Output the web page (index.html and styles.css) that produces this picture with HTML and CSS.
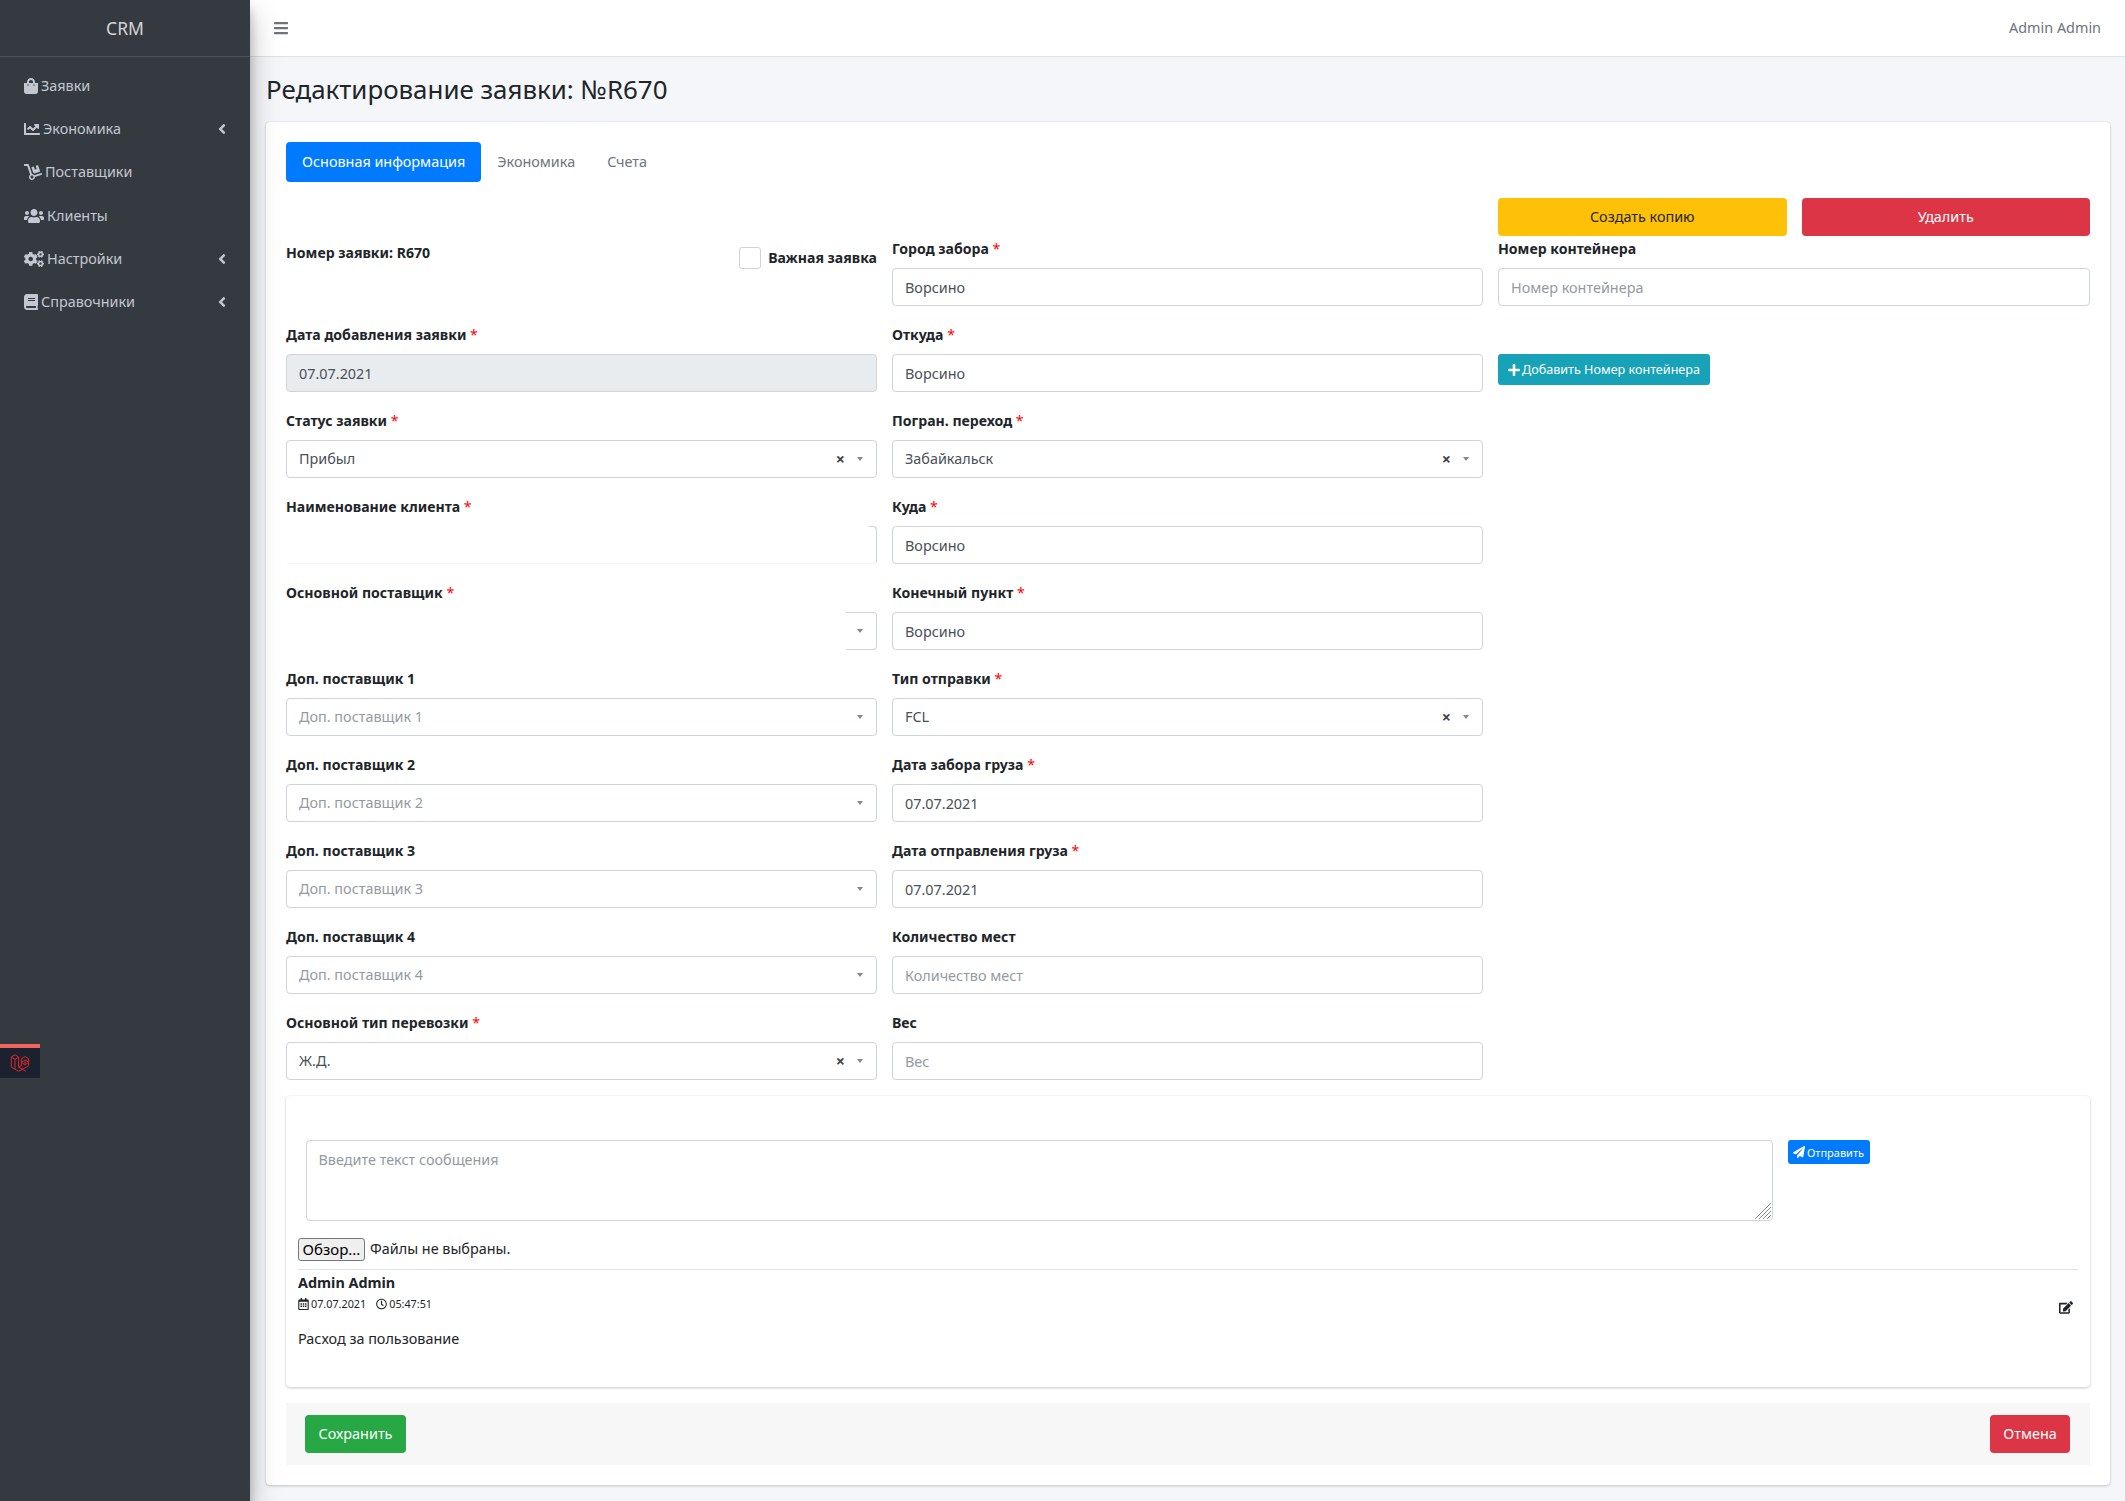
FILE: index.html
```html
<!DOCTYPE html>
<html lang="ru">
<head>
<meta charset="utf-8">
<title>CRM</title>
<link rel="stylesheet" href="styles.css">
</head>
<body>
<svg class="defs" aria-hidden="true">
  <symbol id="i-angle" viewBox="0 0 256 512"><path d="M31.7 239l136-136c9.4-9.4 24.6-9.4 33.9 0l22.6 22.6c9.4 9.4 9.4 24.6 0 33.9L127.9 256l96.4 96.4c9.4 9.4 9.4 24.6 0 33.9L201.7 409c-9.4 9.4-24.6 9.4-33.9 0l-136-136c-9.5-9.4-9.5-24.6-.1-34z"/></symbol>
</svg>
<div class="app">
  <aside class="sidebar">
    <div class="brand">CRM</div>
    <nav class="nav">
      <a class="nav-link"><svg class="ico w14" viewBox="0 0 448 512"><path d="M352 160v-32C352 57.42 294.579 0 224 0 153.42 0 96 57.42 96 128v32H0v272c0 44.183 35.817 80 80 80h288c44.183 0 80-35.817 80-80V160h-96zm-192-32c0-35.29 28.71-64 64-64s64 28.71 64 64v32H160v-32zm160 120c-13.255 0-24-10.745-24-24s10.745-24 24-24 24 10.745 24 24-10.745 24-24 24zm-192 0c-13.255 0-24-10.745-24-24s10.745-24 24-24 24 10.745 24 24-10.745 24-24 24z"/></svg><span>Заявки</span></a>
      <a class="nav-link"><svg class="ico w16" viewBox="0 0 512 512"><path d="M496 384H64V80c0-8.84-7.16-16-16-16H16C7.16 64 0 71.16 0 80v336c0 17.67 14.33 32 32 32h464c8.84 0 16-7.16 16-16v-32c0-8.84-7.16-16-16-16zM464 96H345.94c-21.38 0-32.09 25.85-16.97 40.97l32.4 32.4L288 242.75l-73.37-73.37c-12.5-12.5-32.76-12.5-45.25 0l-68.69 68.69c-6.25 6.25-6.25 16.38 0 22.63l22.62 22.62c6.25 6.25 16.38 6.25 22.63 0L192 237.25l73.37 73.37c12.5 12.5 32.76 12.5 45.25 0l96-96 32.4 32.4c15.12 15.12 40.97 4.41 40.97-16.97V112c.01-8.84-7.15-16-15.99-16z"/></svg><span>Экономика</span><svg class="chev"><use href="#i-angle"/></svg></a>
      <a class="nav-link"><svg class="ico w18" viewBox="0 0 576 512"><path d="M294.2 277.7c18 5 34.7 13.4 49.5 24.7l161.5-53.8c8.4-2.8 12.9-11.9 10.1-20.2L454.9 47.2c-2.8-8.4-11.9-12.9-20.2-10.1l-61.1 20.4 33.1 99.4L346 177l-33.1-99.4-61.6 20.5c-8.4 2.8-12.9 11.9-10.1 20.2l53 159.4zm281 48.7L565 296c-2.8-8.4-11.9-12.9-20.2-10.1l-213.5 71.2c-17.2-22-43.6-36.4-73.5-37L158.4 21.9C154 8.8 141.8 0 128 0H16C7.2 0 0 7.2 0 16v32c0 8.8 7.2 16 16 16h88.9l92.2 276.7c-26.1 20.4-41.7 53.6-36 90.5 6.1 39.4 37.9 72.3 77.3 79.2 60.2 10.7 112.3-34.8 113.4-92.6l213.3-71.2c8.3-2.8 12.9-11.8 10.1-20.2zM256 464c-26.5 0-48-21.5-48-48s21.5-48 48-48 48 21.5 48 48-21.5 48-48 48z"/></svg><span>Поставщики</span></a>
      <a class="nav-link"><svg class="ico w20" viewBox="0 0 640 512"><path d="M96 224c35.3 0 64-28.7 64-64s-28.7-64-64-64-64 28.7-64 64 28.7 64 64 64zm448 0c35.3 0 64-28.7 64-64s-28.7-64-64-64-64 28.7-64 64 28.7 64 64 64zm32 32h-64c-17.6 0-33.5 7.1-45.1 18.6 40.3 22.1 68.9 62 75.1 109.4h66c17.7 0 32-14.3 32-32v-32c0-35.3-28.7-64-64-64zm-256 0c61.9 0 112-50.1 112-112S381.9 32 320 32 208 82.1 208 144s50.1 112 112 112zm76.8 32h-8.3c-20.8 10-43.9 16-68.5 16s-47.6-6-68.5-16h-8.3C179.6 288 128 339.6 128 403.2V432c0 26.5 21.5 48 48 48h288c26.5 0 48-21.5 48-48v-28.8c0-63.6-51.6-115.2-115.2-115.2zm-223.7-13.4C161.5 263.1 145.6 256 128 256H64c-35.3 0-64 28.7-64 64v32c0 17.7 14.3 32 32 32h65.9c6.3-47.4 34.9-87.3 75.2-109.4z"/></svg><span>Клиенты</span></a>
      <a class="nav-link"><svg class="ico w20" viewBox="0 0 640 512"><path d="M512.1 191l-8.2 14.3c-3 5.3-9.4 7.5-15.1 5.4-11.8-4.4-22.6-10.7-32.1-18.6-4.6-3.8-5.8-10.5-2.8-15.7l8.2-14.3c-6.9-8-12.3-17.3-15.9-27.4h-16.5c-6 0-11.2-4.3-12.2-10.3-2-12-2.1-24.6 0-37.1 1-6 6.2-10.4 12.2-10.4h16.5c3.6-10.1 9-19.4 15.9-27.4l-8.2-14.3c-3-5.2-1.9-11.9 2.8-15.7 9.5-7.9 20.4-14.2 32.1-18.6 5.7-2.1 12.1.1 15.1 5.4l8.2 14.3c10.5-1.9 21.2-1.9 31.7 0L552 6.3c3-5.3 9.4-7.5 15.1-5.4 11.8 4.4 22.6 10.7 32.1 18.6 4.6 3.8 5.8 10.5 2.8 15.7l-8.2 14.3c6.9 8 12.3 17.3 15.9 27.4h16.5c6 0 11.2 4.3 12.2 10.3 2 12 2.1 24.6 0 37.1-1 6-6.2 10.4-12.2 10.4h-16.5c-3.6 10.1-9 19.4-15.9 27.4l8.2 14.3c3 5.2 1.9 11.9-2.8 15.7-9.5 7.9-20.4 14.2-32.1 18.6-5.7 2.1-12.1-.1-15.1-5.4l-8.2-14.3c-10.4 1.9-21.2 1.9-31.7 0zm-10.5-58.8c38.5 29.6 82.4-14.3 52.8-52.8-38.5-29.7-82.4 14.3-52.8 52.8zM386.3 286.1l33.7 16.8c10.1 5.8 14.5 18.1 10.5 29.1-8.9 24.2-26.4 46.4-42.6 65.8-7.4 8.9-20.2 11.1-30.3 5.3l-29.1-16.8c-16 13.7-34.6 24.6-54.9 31.7v33.6c0 11.6-8.3 21.6-19.7 23.6-24.6 4.2-50.4 4.4-75.9 0-11.5-2-20-11.9-20-23.6V418c-20.3-7.2-38.9-18-54.9-31.7L74 403c-10 5.8-22.9 3.6-30.3-5.3-16.2-19.4-33.3-41.6-42.2-65.7-4-10.9.4-23.2 10.5-29.1l33.3-16.8c-3.9-20.9-3.9-42.4 0-63.4L12 205.8c-10.1-5.8-14.6-18.1-10.5-29 8.9-24.2 26-46.4 42.2-65.8 7.4-8.9 20.2-11.1 30.3-5.3l29.1 16.8c16-13.7 34.6-24.6 54.9-31.7V57.1c0-11.5 8.2-21.5 19.6-23.5 24.6-4.2 50.5-4.4 76-.1 11.5 2 20 11.9 20 23.6v33.6c20.3 7.2 38.9 18 54.9 31.7l29.1-16.8c10-5.8 22.9-3.6 30.3 5.3 16.2 19.4 33.2 41.6 42.1 65.8 4 10.9.1 23.2-10 29.1l-33.7 16.8c3.9 21 3.9 42.5 0 63.5zm-117.6 21.1c59.2-77-28.7-164.9-105.7-105.7-59.2 77 28.7 164.9 105.7 105.7zm243.4 182.7l-8.2 14.3c-3 5.3-9.4 7.5-15.1 5.4-11.8-4.4-22.6-10.7-32.1-18.6-4.6-3.8-5.8-10.5-2.8-15.7l8.2-14.3c-6.9-8-12.3-17.3-15.9-27.4h-16.5c-6 0-11.2-4.3-12.2-10.3-2-12-2.1-24.6 0-37.1 1-6 6.2-10.4 12.2-10.4h16.5c3.6-10.1 9-19.4 15.9-27.4l-8.2-14.3c-3-5.2-1.9-11.9 2.8-15.7 9.5-7.9 20.4-14.2 32.1-18.6 5.7-2.1 12.1.1 15.1 5.4l8.2 14.3c10.5-1.9 21.2-1.9 31.7 0l8.2-14.3c3-5.3 9.4-7.5 15.1-5.4 11.8 4.4 22.6 10.7 32.1 18.6 4.6 3.8 5.8 10.5 2.8 15.7l-8.2 14.3c6.9 8 12.3 17.3 15.9 27.4h16.5c6 0 11.2 4.3 12.2 10.3 2 12 2.1 24.6 0 37.1-1 6-6.2 10.4-12.2 10.4h-16.5c-3.6 10.1-9 19.4-15.9 27.4l8.2 14.3c3 5.2 1.9 11.9-2.8 15.7-9.5 7.9-20.4 14.2-32.1 18.6-5.7 2.1-12.1-.1-15.1-5.4l-8.2-14.3c-10.4 1.9-21.2 1.9-31.7 0zM501.6 431c38.5 29.6 82.4-14.3 52.8-52.8-38.5-29.6-82.4 14.3-52.8 52.8z"/></svg><span>Настройки</span><svg class="chev"><use href="#i-angle"/></svg></a>
      <a class="nav-link"><svg class="ico w14" viewBox="0 0 448 512"><path d="M448 360V24c0-13.3-10.7-24-24-24H96C43 0 0 43 0 96v320c0 53 43 96 96 96h328c13.3 0 24-10.7 24-24v-16c0-7.5-3.5-14.3-8.9-18.7-4.2-15.4-4.2-59.3 0-74.7 5.4-4.3 8.9-11.1 8.9-18.6zM128 134c0-3.3 2.7-6 6-6h212c3.3 0 6 2.7 6 6v20c0 3.3-2.7 6-6 6H134c-3.3 0-6-2.7-6-6v-20zm0 64c0-3.3 2.7-6 6-6h212c3.3 0 6 2.7 6 6v20c0 3.3-2.7 6-6 6H134c-3.3 0-6-2.7-6-6v-20zm253.4 250H96c-17.7 0-32-14.3-32-32 0-17.6 14.4-32 32-32h285.4c-1.9 17.1-1.9 46.9 0 64z"/></svg><span>Справочники</span><svg class="chev"><use href="#i-angle"/></svg></a>
    </nav>
  </aside>
  <div class="main">
    <header class="topbar">
      <svg class="burger" viewBox="0 0 448 512"><path d="M16 132h416c8.837 0 16-7.163 16-16V76c0-8.837-7.163-16-16-16H16C7.163 60 0 67.163 0 76v40c0 8.837 7.163 16 16 16zm0 160h416c8.837 0 16-7.163 16-16v-40c0-8.837-7.163-16-16-16H16c-8.837 0-16 7.163-16 16v40c0 8.837 7.163 16 16 16zm0 160h416c8.837 0 16-7.163 16-16v-40c0-8.837-7.163-16-16-16H16c-8.837 0-16 7.163-16 16v40c0 8.837 7.163 16 16 16z"/></svg>
      <span class="user">Admin Admin</span>
    </header>
    <h1 class="page-title">Редактирование заявки: №R670</h1>
    <section class="card">
      <div class="tabs">
        <a class="tab active">Основная информация</a>
        <a class="tab">Экономика</a>
        <a class="tab">Счета</a>
      </div>
      <form class="form-grid">
        <div class="actions">
          <button type="button" class="btn btn-warning">Создать копию</button>
          <button type="button" class="btn btn-danger">Удалить</button>
        </div>
        <div class="col col-1">
          <div class="field order-head">
            <b class="order-no">Номер заявки: R670</b>
            <label class="important"><span class="check"></span><b>Важная заявка</b></label>
          </div>
          <div class="field"><div class="lbl">Дата добавления заявки <i>*</i></div><input class="control disabled" value="07.07.2021" disabled></div>
          <div class="field"><div class="lbl">Статус заявки <i>*</i></div><div class="select control"><span class="val">Прибыл</span><span class="clear">×</span><span class="arrow"></span></div></div>
          <div class="field"><div class="lbl">Наименование клиента <i>*</i></div><div class="masked-client"></div></div>
          <div class="field"><div class="lbl">Основной поставщик <i>*</i></div><div class="masked-select"><div class="mask-tail"><span class="arrow"></span></div></div></div>
          <div class="field"><div class="lbl">Доп. поставщик 1</div><div class="select control"><span class="val ph">Доп. поставщик 1</span><span class="arrow"></span></div></div>
          <div class="field"><div class="lbl">Доп. поставщик 2</div><div class="select control"><span class="val ph">Доп. поставщик 2</span><span class="arrow"></span></div></div>
          <div class="field"><div class="lbl">Доп. поставщик 3</div><div class="select control"><span class="val ph">Доп. поставщик 3</span><span class="arrow"></span></div></div>
          <div class="field"><div class="lbl">Доп. поставщик 4</div><div class="select control"><span class="val ph">Доп. поставщик 4</span><span class="arrow"></span></div></div>
          <div class="field"><div class="lbl">Основной тип перевозки <i>*</i></div><div class="select control"><span class="val">Ж.Д.</span><span class="clear">×</span><span class="arrow"></span></div></div>
        </div>
        <div class="col col-2">
          <div class="field"><div class="lbl">Город забора <i>*</i></div><input class="control" value="Ворсино"></div>
          <div class="field"><div class="lbl">Откуда <i>*</i></div><input class="control" value="Ворсино"></div>
          <div class="field"><div class="lbl">Погран. переход <i>*</i></div><div class="select control"><span class="val">Забайкальск</span><span class="clear">×</span><span class="arrow"></span></div></div>
          <div class="field"><div class="lbl">Куда <i>*</i></div><input class="control" value="Ворсино"></div>
          <div class="field"><div class="lbl">Конечный пункт <i>*</i></div><input class="control" value="Ворсино"></div>
          <div class="field"><div class="lbl">Тип отправки <i>*</i></div><div class="select control"><span class="val">FCL</span><span class="clear">×</span><span class="arrow"></span></div></div>
          <div class="field"><div class="lbl">Дата забора груза <i>*</i></div><input class="control" value="07.07.2021"></div>
          <div class="field"><div class="lbl">Дата отправления груза <i>*</i></div><input class="control" value="07.07.2021"></div>
          <div class="field"><div class="lbl">Количество мест</div><input class="control" placeholder="Количество мест"></div>
          <div class="field"><div class="lbl">Вес</div><input class="control" placeholder="Вес"></div>
        </div>
        <div class="col col-3">
          <div class="field"><div class="lbl">Номер контейнера</div><input class="control" placeholder="Номер контейнера"></div>
          <button type="button" class="btn-add"><svg class="plus" viewBox="0 0 448 512"><path d="M416 208H272V64c0-17.67-14.33-32-32-32h-32c-17.67 0-32 14.33-32 32v144H32c-17.67 0-32 14.33-32 32v32c0 17.67 14.33 32 32 32h144v144c0 17.67 14.33 32 32 32h32c17.67 0 32-14.33 32-32V304h144c17.67 0 32-14.33 32-32v-32c0-17.67-14.33-32-32-32z"/></svg>Добавить Номер контейнера</button>
        </div>
      </form>
      <div class="chat">
        <div class="composer">
          <div class="message-wrap">
            <textarea class="message" placeholder="Введите текст сообщения"></textarea>
            <svg class="grip" viewBox="0 0 16 16"><path d="M0 16 16 0M4 16 16 4M8 16 16 8M12 16 16 12"/></svg>
          </div>
          <button type="button" class="btn-send"><svg class="plane" viewBox="0 0 512 512"><path d="M476 3.2L12.5 270.6c-18.1 10.4-15.8 35.6 2.2 43.2L121 358.4l287.3-253.2c5.5-4.9 13.3 2.6 8.6 8.3L176 407v80.5c0 23.6 28.5 32.9 42.5 15.8L282 426l124.6 52.2c14.2 6 30.4-2.9 33-18.2l72-432C515 7.8 493.3-6.8 476 3.2z"/></svg>Отправить</button>
        </div>
        <div class="file-row"><span class="file-btn">Обзор...</span><span class="file-text">Файлы не выбраны.</span></div>
        <div class="msg">
          <div class="msg-author">Admin Admin</div>
          <div class="msg-meta">
            <svg class="mini" viewBox="0 0 448 512"><path d="M148 288h-40c-6.6 0-12-5.4-12-12v-40c0-6.6 5.4-12 12-12h40c6.6 0 12 5.4 12 12v40c0 6.6-5.4 12-12 12zm108-12v-40c0-6.6-5.4-12-12-12h-40c-6.6 0-12 5.4-12 12v40c0 6.6 5.4 12 12 12h40c6.6 0 12-5.4 12-12zm96 0v-40c0-6.6-5.4-12-12-12h-40c-6.6 0-12 5.4-12 12v40c0 6.6 5.4 12 12 12h40c6.6 0 12-5.4 12-12zm-96 96v-40c0-6.6-5.4-12-12-12h-40c-6.6 0-12 5.4-12 12v40c0 6.6 5.4 12 12 12h40c6.6 0 12-5.4 12-12zm-96 0v-40c0-6.6-5.4-12-12-12h-40c-6.6 0-12 5.4-12 12v40c0 6.6 5.4 12 12 12h40c6.6 0 12-5.4 12-12zm192 0v-40c0-6.6-5.4-12-12-12h-40c-6.6 0-12 5.4-12 12v40c0 6.6 5.4 12 12 12h40c6.6 0 12-5.4 12-12zm96-260v352c0 26.5-21.5 48-48 48H48c-26.5 0-48-21.5-48-48V112c0-26.5 21.5-48 48-48h48V12c0-6.6 5.4-12 12-12h40c6.6 0 12 5.4 12 12v52h128V12c0-6.6 5.4-12 12-12h40c6.6 0 12 5.4 12 12v52h48c26.5 0 48 21.5 48 48zm-48 346V160H48v298c0 3.3 2.7 6 6 6h340c3.3 0 6-2.7 6-6z"/></svg>
            <span class="meta-date">07.07.2021</span>
            <svg class="mini" viewBox="0 0 512 512"><path d="M256 8C119 8 8 119 8 256s111 248 248 248 248-111 248-248S393 8 256 8zm0 448c-110.5 0-200-89.5-200-200S145.5 56 256 56s200 89.5 200 200-89.5 200-200 200zm61.8-104.4l-84.9-61.7c-3.1-2.3-4.9-5.9-4.9-9.7V116c0-6.6 5.4-12 12-12h32c6.6 0 12 5.4 12 12v141.7l66.8 48.6c5.4 3.9 6.5 11.4 2.6 16.8L334.6 349c-3.9 5.3-11.4 6.5-16.8 2.6z"/></svg>
            <span>05:47:51</span>
            <svg class="edit" viewBox="0 0 576 512"><path d="M402.6 83.2l90.2 90.2c3.8 3.8 3.8 10 0 13.8L274.4 405.6l-92.8 10.3c-12.4 1.4-22.9-9.1-21.5-21.5l10.3-92.8L388.8 83.2c3.8-3.8 10-3.8 13.8 0zm162-22.9l-48.8-48.8c-15.2-15.2-39.9-15.2-55.2 0l-35.4 35.4c-3.8 3.8-3.8 10 0 13.8l90.2 90.2c3.8 3.8 10 3.8 13.8 0l35.4-35.4c15.2-15.3 15.2-40 0-55.2zM384 346.2V448H64V128h229.8c3.2 0 6.2-1.3 8.5-3.5l40-40c7.6-7.6 2.2-20.5-8.5-20.5H48C21.5 64 0 85.5 0 112v352c0 26.5 21.5 48 48 48h352c26.5 0 48-21.5 48-48V306.2c0-10.7-12.9-16-20.5-8.5l-40 40c-2.2 2.3-3.5 5.3-3.5 8.5z"/></svg>
          </div>
          <div class="msg-text">Расход за пользование</div>
        </div>
      </div>
      <div class="card-footer">
        <button type="button" class="btn btn-success">Сохранить</button>
        <button type="button" class="btn btn-danger">Отмена</button>
      </div>
    </section>
  </div>
</div>
<div class="debugbar">
  <svg class="lara" viewBox="0 0 24 24"><path d="M2.5 5.500 6.500 3l4 2.500v11l8 4.500M2.500 5.500v11l8 4.500 11-6v-4l-4-2.200-4 2.200v4M6.500 8 2.500 5.500M6.500 8l4-2.500M6.500 8v11M10.500 16.500l3-1.700M17.500 9.300v4.500M13.500 11.500l4 2.300 4-2.300M17.500 5 13.500 7.300v4.200M17.500 5l4 2.300v4.200"/></svg>
</div>
</body>
</html>
```
FILE: styles.css
```css
* { box-sizing: border-box; }
html, body { margin: 0; padding: 0; }
body {
  height: 1501px;
  overflow: hidden;
  background: #f4f6f9;
  color: #212529;
  font-family: "Noto Sans", "Liberation Sans", sans-serif;
  font-size: 14.4px;
  line-height: 24px;
}
.defs { width: 0; height: 0; position: absolute; }
.app { display: flex; min-height: 1501px; }

.sidebar {
  width: 250px;
  flex: none;
  background: #343a40;
  box-shadow: 0 14px 28px rgba(0,0,0,.25), 0 10px 10px rgba(0,0,0,.22);
  position: relative;
  z-index: 2;
}
.brand {
  height: 57px;
  border-bottom: 1px solid #4b545c;
  color: rgba(255,255,255,.8);
  font-size: 17.5px;
  line-height: 56px;
  text-align: center;
}
.nav { padding: 9px 8px 0 24px; display: flex; flex-direction: column; gap: 3.2px; }
.nav-link {
  height: 40px;
  display: flex;
  align-items: center;
  gap: 3px;
  color: #c2c7d0;
  padding-right: 16px;
}
.ico { height: 16px; fill: #c2c7d0; flex: none; }
.w14 { width: 14px; }
.w16 { width: 16px; }
.w18 { width: 18px; }
.w20 { width: 20px; }
.chev { width: 8px; height: 16px; fill: #c2c7d0; margin-left: auto; }

.main { flex: 1; min-width: 0; }
.topbar {
  height: 57px;
  background: #fff;
  border-bottom: 1px solid #dee2e6;
  display: flex;
  align-items: center;
  justify-content: space-between;
  padding: 0 24px;
}
.burger { width: 14px; height: 16px; fill: #6c757d; }
.user { color: #6c757d; }
.page-title {
  margin: 0;
  padding: 15px 16px;
  font-size: 25.9px;
  font-weight: 400;
  line-height: 35px;
  color: #212529;
}
.card {
  margin: 0 15px 0 16px;
  padding: 20px;
  background: #fff;
  border-radius: 4px;
  box-shadow: 0 0 1px rgba(0,0,0,.125), 0 1px 3px rgba(0,0,0,.2);
  height: 1363px;
}
.tabs { display: flex; gap: 0; height: 40px; }
.tab { padding: 8px 16px; color: #6c757d; border-radius: 4px; }
.tab.active { background: #007bff; color: #fff; }

.form-grid {
  margin-top: 16px;
  display: grid;
  grid-template-columns: 591px 591px 1fr;
  column-gap: 15px;
}
.actions { grid-column: 3; grid-row: 1; display: grid; grid-template-columns: 1fr 1fr; gap: 15px; }
.col-1 { grid-column: 1; grid-row: 2; }
.col-2 { grid-column: 2; grid-row: 2; }
.col-3 { grid-column: 3; grid-row: 2; }
.field { height: 86px; }
.lbl { font-weight: 700; height: 32px; font-size: 14.1px; padding-top: 1px; }
.lbl i { color: #f00; font-style: normal; font-weight: 400; }
.control {
  display: block;
  width: 100%;
  height: 38px;
  padding: 6px 12px;
  border: 1px solid #ced4da;
  border-radius: 4px;
  background: #fff;
  color: #495057;
  font: inherit;
  outline: none;
}
.control::placeholder, .message::placeholder { color: #939ba2; opacity: 1; }
.control.disabled { background: #e9ecef; }
.select { display: flex; align-items: center; }
.val { flex: 1; }
.ph { color: #939ba2; }
.clear { font-weight: 700; color: #444; margin-right: 12px; line-height: 1; font-size: 16px; }
.arrow {
  width: 0; height: 0;
  border: 3px solid transparent;
  border-top: 4px solid #888;
  border-bottom: 0;
  margin-right: 1px;
}
.order-head { display: flex; justify-content: space-between; align-items: flex-start; padding-top: 5px; font-size: 14.1px; }
.order-no { line-height: 24px; }
.important { display: flex; align-items: center; gap: 7px; margin-top: 5px; }
.check { width: 22px; height: 22px; border: 1px solid #ced4da; border-radius: 3px; }

.masked-client {
  height: 38px;
  border: 1px solid #ced4da;
  border-left-color: transparent;
  border-top-color: transparent;
  border-bottom-color: #f1f3f5;
  border-radius: 4px;
  position: relative;
}
.masked-client::before {
  content: "";
  position: absolute;
  right: -1px; top: -1px;
  width: 7px; height: 4px;
  border-top: 1px solid #ced4da;
  border-right: 1px solid #ced4da;
  border-top-right-radius: 4px;
}
.masked-select { display: flex; justify-content: flex-end; }
.mask-tail {
  width: 31px;
  height: 38px;
  border: 1px solid #ced4da;
  border-left: 0;
  border-radius: 0 4px 4px 0;
  display: flex;
  align-items: center;
  justify-content: flex-end;
  padding-right: 12px;
}

.btn {
  height: 38px;
  border: 0;
  border-radius: 4px;
  font: inherit;
  padding: 0 12px;
}
.btn-warning { background: #ffc107; color: #212529; }
.btn-danger { background: #dc3545; color: #fff; }
.btn-success { background: #28a745; color: #fff; }
.btn-add {
  margin-top: 32px;
  height: 31px;
  width: 212px;
  border: 0;
  border-radius: 3px;
  background: #17a2b8;
  color: #fff;
  font: inherit;
  font-size: 12.6px;
  padding: 0;
  display: flex;
  align-items: center;
  justify-content: center;
  gap: 2px;
}
.plus { width: 12px; height: 14px; fill: #fff; }

.chat {
  height: 291px;
  padding: 44px 12px 0;
  border-radius: 4px;
  box-shadow: 0 0 1px rgba(0,0,0,.125), 0 1px 3px rgba(0,0,0,.2);
}
.composer { display: flex; align-items: flex-start; gap: 15px; padding-left: 7.500px; }
.message-wrap { position: relative; width: 1467px; height: 81px; }
.message {
  width: 100%;
  height: 81px;
  padding: 7px 12px;
  border: 1px solid #ced4da;
  border-radius: 4px;
  font: inherit;
  color: #495057;
  outline: none;
  display: block;
  resize: none;
}
.grip {
  position: absolute;
  right: 2px; bottom: 2px;
  width: 16px; height: 16px;
  fill: none;
  stroke: #8a8a8a;
  stroke-width: 1;
}
.btn-send {
  width: 82px;
  height: 24px;
  border: 0;
  border-radius: 3px;
  background: #007bff;
  color: #fff;
  font: inherit;
  font-size: 11px;
  line-height: 1;
  padding: 0;
  display: flex;
  align-items: center;
  justify-content: center;
  gap: 2px;
}
.plane { width: 12px; height: 12px; fill: #fff; }
.file-row { margin-top: 16px; height: 24px; display: flex; align-items: center; gap: 5px; }
.file-btn {
  width: 67px;
  height: 23px;
  border: 1px solid #767676;
  border-radius: 3px;
  background: #efefef;
  color: #000;
  font-size: 15px;
  line-height: 20px;
  text-align: center;
}
.file-text { color: #212529; }
.msg { margin-top: 8px; border-top: 1px solid #dee2e6; }
.msg-author { font-weight: 700; line-height: 26px; }
.msg-meta { display: flex; align-items: center; gap: 2px; font-size: 10.8px; line-height: 16px; height: 16px; }
.mini { width: 11px; height: 12px; fill: #212529; }
.meta-date { margin-right: 8px; }
.edit { width: 14px; height: 13px; fill: #212529; margin-left: auto; margin-right: 5px; margin-top: 6px; }
.msg-text { margin-top: 15px; }

.card-footer {
  margin-top: 16px;
  height: 62px;
  padding: 12px 20px 12px 19px;
  background: #f7f7f7;
  display: flex;
  justify-content: space-between;
}
.card-footer .btn-success { width: 101px; }
.card-footer .btn-danger { width: 80px; }

.debugbar {
  position: fixed;
  left: 0; top: 1044px;
  width: 40px; height: 34px;
  background: #1c2130;
  border-top: 4px solid #f4645f;
  z-index: 3;
  display: flex;
  align-items: center;
  justify-content: center;
}
.lara { width: 22px; height: 22px; fill: none; stroke: #e8262a; stroke-width: 1; }
```
